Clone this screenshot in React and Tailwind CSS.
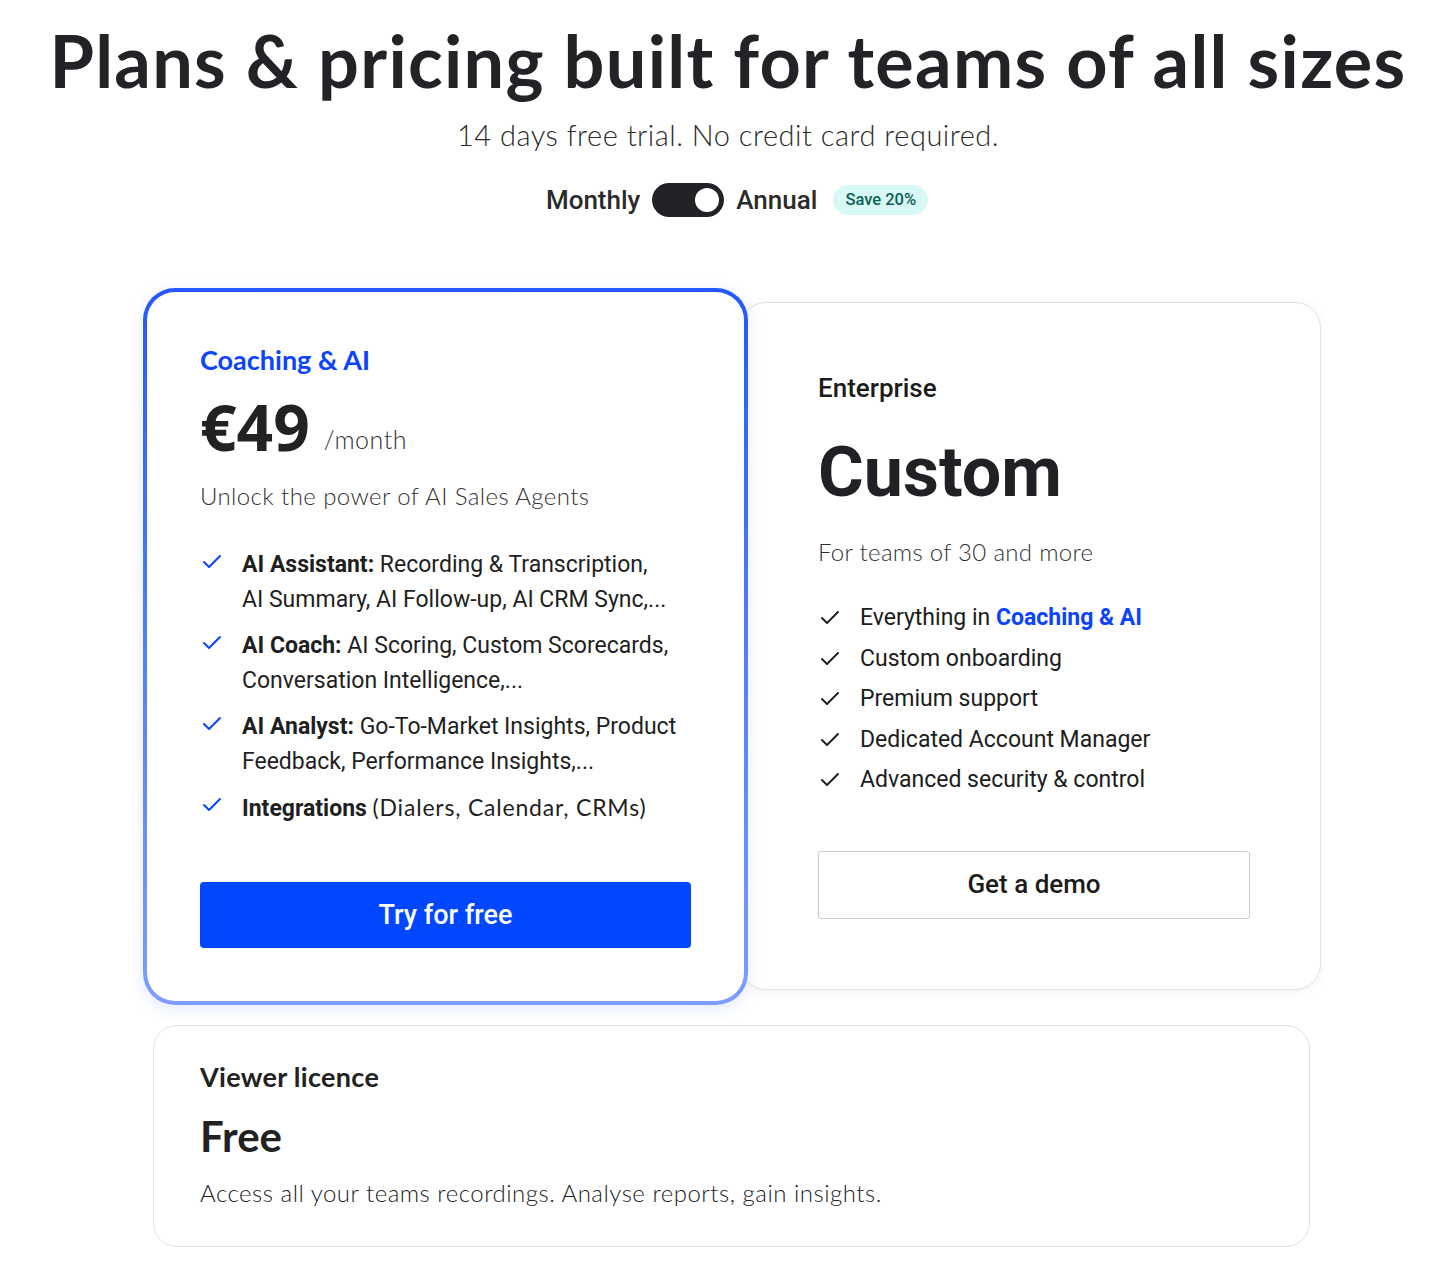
import { Check } from "lucide-react";

const head = { fontFamily: "Lato, 'Open Sans', sans-serif" };
const body = { fontFamily: "Roboto, 'Liberation Sans', sans-serif" };

const coachingFeatures = [
    { title: "AI Assistant:", text: [" Recording & Transcription,", "AI Summary, AI Follow-up, AI CRM Sync,..."] },
    { title: "AI Coach:", text: [" AI Scoring, Custom Scorecards,", "Conversation Intelligence,..."] },
    { title: "AI Analyst:", text: [" Go-To-Market Insights, Product", "Feedback, Performance Insights,..."] },
];

const enterpriseFeatures = [
    "Custom onboarding",
    "Premium support",
    "Dedicated Account Manager",
    "Advanced security & control",
];

export default function App() {
    return (
        <div className="min-h-screen w-full bg-white text-[#202124]">
            {/* Header */}
            <header className="flex flex-col items-center pt-[18px]">
                <h1 style={head} className="text-[72px] font-bold leading-[84px] tracking-[1.3px] text-[#222326]">
                    Plans &amp; pricing built for teams of all sizes
                </h1>
                <p style={head} className="mt-[11px] text-[29px] font-light tracking-[0.5px] text-[#2a2a2a]">
                    14 days free trial. No credit card required.
                </p>
                <div style={body} className="mt-[24px] flex items-center gap-3 pl-[18px]">
                    <span className="text-[26px] font-medium text-[#2b2b2b]">Monthly</span>
                    <div className="flex h-[34px] w-[72px] items-center justify-end rounded-full bg-[#222326] px-[5px]">
                        <div className="h-[24px] w-[24px] rounded-full bg-white" />
                    </div>
                    <span className="text-[26px] font-medium text-[#2b2b2b]">Annual</span>
                    <span className="ml-1 rounded-full bg-[#d8f8f5] px-[12px] py-[3px] text-[16.5px] font-medium text-[#0b5f57]">
                        Save 20%
                    </span>
                </div>
            </header>

            <div className="flex flex-col pl-[143px] pt-[68px] pb-10">
                {/* Cards row */}
                <div className="flex w-[1178px] items-center">
                    {/* Coaching & AI */}
                    <div className="relative z-10 w-[606px] rounded-[32px] bg-linear-to-b from-[#2656ff] to-[#7d9dff] p-[4px] shadow-[0_4px_16px_rgba(40,80,255,0.12)]">
                        <div className="flex h-[709px] flex-col rounded-[28px] bg-white px-[53px] pt-[48px]">
                            <h2 style={head} className="text-[27px] font-bold text-[#0a44ff]">Coaching &amp; AI</h2>
                            <div className="mt-[12px] flex items-end gap-[14px]">
                                <span style={{ fontFamily: "'Open Sans', sans-serif" }} className="text-[64px] font-bold leading-[70px] text-[#222]">
                                    €49
                                </span>
                                <span style={head} className="pb-[4px] text-[25px] font-light tracking-[0.5px] text-[#333]">/month</span>
                            </div>
                            <p style={head} className="mt-[16px] text-[24px] font-light tracking-[0.4px] text-[#333]">
                                Unlock the power of AI Sales Agents
                            </p>

                            <ul style={body} className="mt-[33px] flex flex-col gap-[11px] text-[23px] leading-[35px] text-[#1f1f1f]">
                                {coachingFeatures.map((f) => (
                                    <li key={f.title} className="flex gap-[18px]">
                                        <Check className="mt-[3px] shrink-0 text-[#0a44ff]" size={24} strokeWidth={2} />
                                        <span>
                                            <b className="font-bold">{f.title}</b>
                                            {f.text[0]}
                                            <br />
                                            {f.text[1]}
                                        </span>
                                    </li>
                                ))}
                                <li className="flex gap-[18px]">
                                    <Check className="mt-[3px] shrink-0 text-[#0a44ff]" size={24} strokeWidth={2} />
                                    <span>
                                        <b className="font-bold">Integrations</b>{" "}
                                        <span style={head} className="tracking-[0.8px]">(Dialers, Calendar, CRMs)</span>
                                    </span>
                                </li>
                            </ul>

                            <button style={body} className="mt-[56px] h-[66px] w-full rounded-[4px] bg-[#0047ff] text-[27px] font-medium text-white">
                                Try for free
                            </button>
                        </div>
                    </div>

                    {/* Enterprise */}
                    <div className="-ml-[8px] flex h-[688px] flex-1 flex-col rounded-[26px] border border-[#dfe2e8] bg-white pl-[77px] pr-[70px] pt-[66px] shadow-[0_2px_10px_rgba(0,0,0,0.05)]">
                        <h2 style={body} className="text-[26px] font-medium text-[#1c1c1c]">Enterprise</h2>
                        <div style={body} className="mt-[24px] text-[70px] font-bold leading-[80px] text-[#1f2125]">Custom</div>
                        <p style={head} className="mt-[22px] text-[24px] font-light tracking-[0.3px] text-[#333]">For teams of 30 and more</p>

                        <ul style={body} className="mt-[28px] flex flex-col text-[23px] leading-[40.5px] text-[#1c1c1c]">
                            <li className="flex items-center gap-[18px]">
                                <Check className="shrink-0 text-[#222]" size={24} strokeWidth={2} />
                                <span>
                                    Everything in <b className="font-bold text-[#0a44ff]">Coaching &amp; AI</b>
                                </span>
                            </li>
                            {enterpriseFeatures.map((f) => (
                                <li key={f} className="flex items-center gap-[18px]">
                                    <Check className="shrink-0 text-[#222]" size={24} strokeWidth={2} />
                                    <span>{f}</span>
                                </li>
                            ))}
                        </ul>

                        <button style={body} className="mt-[50px] h-[68px] w-[432px] rounded-[3px] border border-[#c9cbd0] bg-white text-[26px] font-medium text-[#1c1c1c]">
                            Get a demo
                        </button>
                    </div>
                </div>

                {/* Viewer licence */}
                <div className="ml-[10px] mt-[20px] w-[1157px] rounded-[24px] border border-[#dfe2e8] bg-white px-[46px] pt-[31px] pb-[35px]">
                    <h3 style={head} className="text-[27px] font-bold tracking-[0.3px] text-[#222]">Viewer licence</h3>
                    <div style={head} className="mt-[13px] text-[42px] font-bold leading-[52px] text-[#222]">Free</div>
                    <p style={head} className="mt-[13px] text-[24px] font-light tracking-[0.5px] text-[#222]">
                        Access all your teams recordings. Analyse reports, gain insights.
                    </p>
                </div>
            </div>
        </div>
    );
}
